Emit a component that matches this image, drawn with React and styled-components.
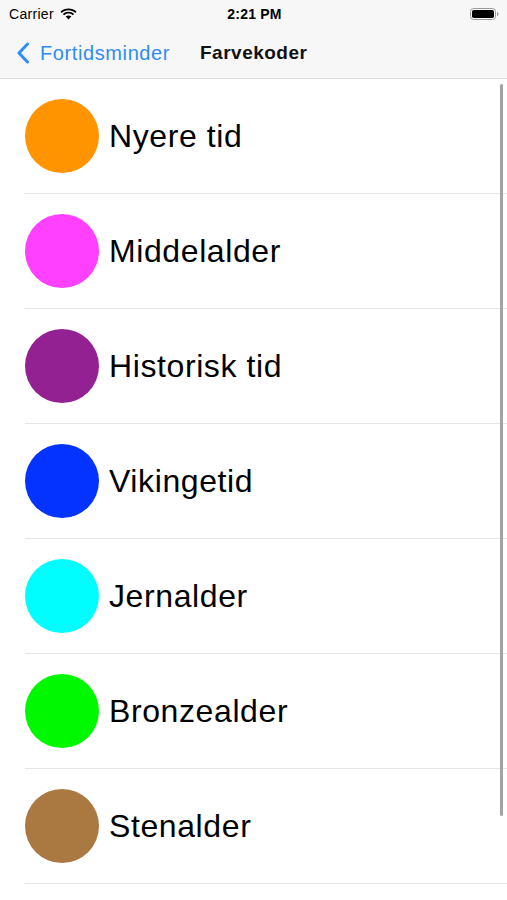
import styled, { createGlobalStyle } from "styled-components";

const GlobalStyle = createGlobalStyle`
  html, body {
    margin: 0;
    padding: 0;
    background: #ffffff;
    font-family: "Liberation Sans", Arial, sans-serif;
  }
`;

const Screen = styled.div`
  width: 507px;
  height: 900px;
  position: relative;
  overflow: hidden;
  background: #fff;
`;

const Header = styled.div`
  background: #f7f7f7;
  border-bottom: 1px solid #dcdcdc;
`;

const StatusBar = styled.div`
  height: 28px;
  display: flex;
  align-items: center;
  justify-content: space-between;
  padding: 0 7px 0 9px;
  font-size: 14px;
  color: #000;
`;

const Carrier = styled.div`
  display: flex;
  align-items: center;
  gap: 6px;
  width: 120px;
  letter-spacing: 0.3px;
`;

const Clock = styled.div`
  font-weight: bold;
  letter-spacing: 0.2px;
`;

const Battery = styled.div`
  width: 120px;
  display: flex;
  justify-content: flex-end;
`;

const NavBar = styled.div`
  height: 50px;
  display: flex;
  align-items: center;
  padding-left: 16px;
`;

const Back = styled.div`
  display: flex;
  align-items: center;
  gap: 10px;
  color: #2f8cf2;
  font-size: 20px;
  letter-spacing: 0.6px;
  width: 184px;
`;

const Title = styled.div`
  font-size: 19px;
  font-weight: bold;
  letter-spacing: 0.5px;
  color: #111;
`;

const List = styled.div`
  display: flex;
  flex-direction: column;
`;

const Row = styled.div`
  height: 114px;
  margin-left: 25px;
  display: flex;
  align-items: center;
  gap: 10px;
  border-bottom: 1px solid #e6e6e6;
`;

const Dot = styled.div`
  width: 74px;
  height: 74px;
  border-radius: 50%;
  background: ${(p) => p.$color};
`;

const Label = styled.span`
  font-size: 32px;
  letter-spacing: 0.6px;
  color: #000;
`;

const ScrollThumb = styled.div`
  position: absolute;
  right: 4px;
  top: 84px;
  width: 3px;
  height: 732px;
  border-radius: 2px;
  background: #a2a2a2;
`;

const periods = [
  { name: "Nyere tid", color: "#ff9300" },
  { name: "Middelalder", color: "#ff40ff" },
  { name: "Historisk tid", color: "#942192" },
  { name: "Vikingetid", color: "#0433ff" },
  { name: "Jernalder", color: "#00fdff" },
  { name: "Bronzealder", color: "#00f900" },
  { name: "Stenalder", color: "#aa7942" },
];

export default function App() {
  return (
    <Screen>
      <GlobalStyle />
      <Header>
        <StatusBar>
          <Carrier>
            Carrier
            <svg width="17" height="12" viewBox="0 0 17 12">
              <path d="M8.5 2.2c2.6 0 5 1 6.8 2.7l1.2-1.3C14.4 1.6 11.6.4 8.5.4S2.6 1.6.5 3.6l1.2 1.3C3.5 3.2 5.9 2.2 8.5 2.2z" fill="#000" />
              <path d="M8.5 5.6c1.7 0 3.2.6 4.4 1.7l1.2-1.3C12.6 4.6 10.6 3.8 8.5 3.8S4.4 4.6 2.9 6l1.2 1.3c1.2-1.1 2.7-1.7 4.4-1.7z" fill="#000" />
              <path d="M8.5 11.6l2.8-3c-.8-.7-1.7-1.1-2.8-1.1s-2 .4-2.8 1.1z" fill="#000" />
            </svg>
          </Carrier>
          <Clock>2:21 PM</Clock>
          <Battery>
            <svg width="30" height="14" viewBox="0 0 30 14">
              <rect x="0.5" y="1.5" width="25" height="11" rx="3" fill="none" stroke="#9a9a9a" />
              <rect x="2" y="3" width="22" height="8" rx="1.8" fill="#000" />
              <path d="M27 5v4c.9-.3 1.5-1.1 1.5-2S27.9 5.3 27 5z" fill="#9a9a9a" />
            </svg>
          </Battery>
        </StatusBar>
        <NavBar>
          <Back>
            <svg width="14" height="22" viewBox="0 0 14 22">
              <path d="M11.5 2 L3 11 L11.5 20" fill="none" stroke="#2f8cf2" strokeWidth="3" strokeLinecap="round" strokeLinejoin="round" />
            </svg>
            Fortidsminder
          </Back>
          <Title>Farvekoder</Title>
        </NavBar>
      </Header>
      <List>
        {periods.map((p) => (
          <Row key={p.name}>
            <Dot $color={p.color} />
            <Label>{p.name}</Label>
          </Row>
        ))}
      </List>
      <ScrollThumb />
    </Screen>
  );
}
